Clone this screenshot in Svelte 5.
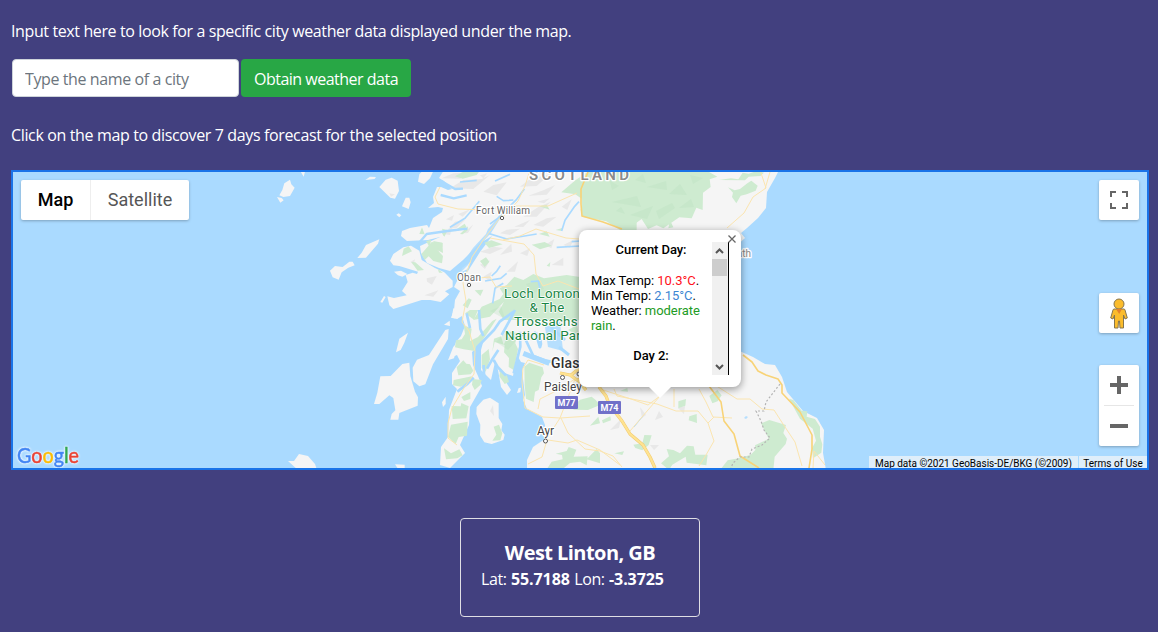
<script>
  let city = $state('');

  const logo = [
    ['G', '#4285f4'], ['o', '#ea4335'], ['o', '#fbbc05'],
    ['g', '#4285f4'], ['l', '#34a853'], ['e', '#ea4335']
  ];
</script>

<main>
  <p class="intro">Input text here to look for a specific city weather data displayed under the map.</p>
  <form class="search" onsubmit={(e) => e.preventDefault()}>
    <input placeholder="Type the name of a city" bind:value={city} />
    <button class="obtain">Obtain weather data</button>
  </form>
  <p class="hint">Click on the map to discover 7 days forecast for the selected position</p>

  <section class="map">
    <svg class="terrain" viewBox="13 172 1134 296" width="1134" height="296">
      <rect x="13" y="172" width="1134" height="296" fill="#aadaff" />
      <!-- mainland -->
      <path fill="#f5f5f5" d="M444 170 L439 178 444 181 452 189 448 190 441 187 437 187 433 197 434 203 428 208 438 207 443 208 442 212 433 218 429 228 427 225 410 228 402 231 401 236 407 241 428 240 440 237 420 246 421 253 427 263 439 268 450 271 463 260 480 243 492 236 480 252 468 271 459 277 454 287 460 291 455 300 454 310 457 319 462 316 465 326 461 336 456 342 450 358 457 355 460 361 452 373 452 384 457 389 449 410 448 437 441 447 440 465 450 468 465 453 460 445 469 425 470 407 482 386 478 376 473 365 472 352 477 348 484 339 481 350 481 370 491 380 495 362 498 370 501 387 507 395 511 390 499 371 513 376 517 355 521 362 525 363 522 371 525 395 523 400 527 409 542 417 545 425 545 439 533 447 527 460 527 470 826 470 823 453 824 430 817 418 803 411 787 392 782 377 775 365 765 364 753 357 735 349 700 340 700 240 735 247 745 238 741 233 747 228 758 218 766 208 767 192 775 178 779 170Z" />
      <!-- western islands -->
      <g transform="translate(260 165) scale(.33333)" fill="#f5f5f5">
        <path d="M90 44 94 58 104 68 90 93 70 96 58 91 67 75 73 55ZM51 96 65 99 71 106 61 113ZM122 20 135 20 131 35ZM316 45 330 35 348 36 344 42ZM358 66 377 44 395 38 413 47 417 78 405 101 391 98ZM474 50 478 28 487 18 520 18 510 40 492 57ZM426 124 437 98 448 98 452 112 446 132ZM409 149 416 145 424 151 418 157ZM358 223 354 236 318 278 292 279 305 263 318 240ZM210 317 225 303 248 306 268 290 278 290 284 301 265 308 245 322 236 344 218 337ZM361 411 372 393 377 396 367 413Z" />
        <path d="M430 247 453 242 478 257 485 285 525 309 553 322 578 347 578 366 555 379 568 388 542 411 511 405 485 405 400 432 388 421 382 394 402 399 440 391 426 378 443 351 437 330 458 323 471 327 474 320 418 303 400 301 390 287 400 267Z" />
        <path d="M402 320 423 317 442 327 427 335 414 331Z" />
        <path d="M632 290 622 313 600 323 607 308ZM596 374 608 360 620 357 608 378ZM580 430 588 432 586 460 575 458Z" />
      </g>
      <g transform="translate(360 310) scale(.33333)" fill="#f5f5f5">
        <path d="M108 127 118 86 144 68 133 98 122 120ZM158 173 171 149 207 135 256 60 266 57 264 87 219 163 196 223 178 229 160 214ZM61 199 92 198 127 162 148 158 151 198 165 245 174 262 173 287 118 309 115 329 91 329 95 312 106 301 100 264 88 256 58 282 42 282 52 248ZM246 277 257 260 257 282 249 291ZM273 23 282 0 294 2 292 27ZM252 44 269 32 270 48ZM264 151 280 110 295 97 282 145ZM105 463 134 464 134 480 115 478ZM471 249 476 234 483 233 481 247Z" />
        <path d="M350 291 370 269 390 263 416 280 416 324 427 342 424 361 434 374 430 390 395 402 373 397 360 376 361 344 349 312Z" />
      </g>
      <path fill="#f5f5f5" d="M288 461 294 461 299 454 308 456 315 464 317 470 298 470Z" />

      <!-- relief shading -->
      <g fill="#e8e8e8">
        <g transform="translate(420 165) scale(.33333)">
          <path d="M65 40 100 25 150 22 120 41ZM90 70 130 45 185 42 210 30 160 72ZM190 80 220 60 260 52 230 91ZM180 31 202 25 190 40ZM300 65 330 42 390 28 350 63ZM115 147 150 133 128 155ZM85 191 105 170 135 165 110 189ZM130 205 160 178 144 204ZM325 92 370 76 405 60 380 89ZM310 155 355 126 392 110 350 155ZM283 185 330 165 310 186ZM340 180 380 160 410 155 370 185ZM240 205 260 194 300 191 270 210ZM180 260 220 245 250 249 210 267ZM240 270 274 236 276 260ZM300 265 330 250 322 273ZM180 299 210 286 195 312ZM260 320 294 289 285 320ZM375 240 403 222 394 250ZM430 240 460 225 450 248ZM395 300 430 278 430 302ZM30 273 60 242 53 279ZM190 335 215 320 208 348ZM425 125 455 103 442 135ZM352 110 390 100 372 115Z" />
        </g>
        <g transform="translate(260 165) scale(.33333)">
          <path d="M500 340 530 333 516 359 501 350ZM493 391 535 376 520 395ZM552 207 579 180 570 210ZM388 85 405 88 393 95ZM452 290 465 283 460 300ZM558 163 582 150 576 167Z" />
        </g>
        <path d="M490 411 493 405 494 416ZM610 430 621 419 619 428ZM650 445 654 450 659 445ZM640 407 642 418 646 415ZM678 408 685 406 684 414ZM655 420 659 411 663 417Z" />
      </g>

      <!-- woodland -->
      <g fill="#ceebd0">
        <g transform="translate(420 165) scale(.33333)">
          <path d="M424 82 466 46 507 18 650 18 650 205 600 195 559 169 485 155 485 101 466 88Z" />
          <path d="M105 34 128 21 178 19 170 30 128 41ZM120 207 144 184 142 197 128 208ZM66 191 83 195 73 216ZM40 228 67 233 69 264 45 252ZM193 233 214 226 248 238 207 249ZM180 288 198 277 208 290 194 306ZM335 239 374 231 395 242 360 253ZM357 207 380 199 389 215ZM380 302 391 291 389 305ZM407 195 429 188 425 198ZM128 421 146 400 155 404 143 430ZM164 376 190 374 181 393ZM260 360 283 335 310 345 340 327 372 340 440 330 485 337 485 465 252 465 236 440 252 410 210 455 160 465 185 425 239 402 250 387 239 370ZM177 441 218 410 209 446ZM18 228 34 224 28 245ZM358 124 380 119 389 134Z" />
        </g>
        <g transform="translate(620 165) scale(.33333)">
          <path d="M0 18 262 18 292 35 269 43 272 66 249 83 248 135 229 128 215 160 178 157 130 190 110 181 84 192 65 162 36 183 0 193ZM297 45 333 40 355 43 368 23 386 26 410 18 432 23 421 33 386 35 375 46ZM324 67 344 76 360 72 382 55 394 47 413 62 407 77 380 88 362 92 349 115 336 96 339 83ZM145 190 150 165 160 187Z" />
        </g>
        <g transform="translate(260 165) scale(.33333)">
          <path d="M478 207 486 187 494 208ZM426 273 431 251 446 244 456 259ZM454 291 466 292 492 315 473 317ZM484 267 505 243 515 231 548 234 547 246 530 253 549 273 546 295 520 288 506 274 494 285ZM533 311 548 323 537 323ZM592 191 614 176 620 187 592 198 570 199ZM543 199 557 199 551 214Z" />
        </g>
        <g transform="translate(360 310) scale(.33333)">
          <path d="M315 10 330 0 354 0 342 29ZM311 45 335 56 330 93 354 81 397 33 410 26 385 65 345 123 311 118 285 112 288 91 305 88 315 72ZM402 86 423 79 431 104 450 65 472 69 466 100 474 117 462 181 446 171 447 144 432 127 434 105 404 96 397 125ZM365 135 386 117 390 148 377 185 365 174ZM290 172 310 151 319 161 330 163 340 182 332 193 295 196ZM281 210 336 199 327 218 302 230 279 226ZM338 207 365 210 361 225 344 240 336 224ZM304 261 331 246 331 267 312 273ZM275 288 302 289 304 279 326 289 319 325 278 327ZM273 344 323 335 321 377 296 381 287 402 264 380ZM252 415 273 430 298 418 308 436 292 445 258 448ZM401 350 417 344 427 370 421 391 397 392 409 374ZM493 170 508 158 548 172 552 190 544 202 536 240 525 245 521 276 498 266 494 226ZM421 175 441 197 447 216 434 222 418 199ZM645 284 660 269 695 260 707 270 720 285 684 300 640 299ZM575 455 608 448 606 435 587 431 620 423 626 411 649 419 641 440 683 439 680 466 660 455 630 459 607 478 560 478ZM690 347 715 320 720 340ZM680 448 710 417 720 430 720 460Z" />
        </g>
        <g transform="translate(600 340) scale(.33333)">
          <path d="M6 241 31 229 33 241 9 250ZM100 314 127 310 133 285 155 286 146 315 127 331 106 324ZM43 340 72 334 67 345ZM183 370 207 349 200 327 220 330 240 340 261 317 281 319 286 344 323 344 319 376 260 368 257 350 217 374 207 390ZM235 184 258 177 256 197 235 205ZM328 168 352 150 365 166 353 184 337 190ZM268 229 290 222 291 249 266 241ZM60 153 82 144 84 155ZM483 250 508 240 558 255 550 279 561 296 557 312 524 350 520 390 360 390 383 361 420 354 452 344 466 330 465 316 506 296ZM567 176 580 180 605 212 622 214 620 230 645 237 660 260 660 290 667 313 664 338 639 355 636 325 648 302 638 266 600 236Z" />
        </g>
        <path d="M580 210 587 206 590 214ZM568 330 577 325 579 336ZM566 403 574 405 571 408Z" />
      </g>
      <g fill="#b7dfbd" opacity=".3">
        <path d="M635 180 643 174 646 183ZM647 187 666 181 667 190ZM669 194 680 184 687 195ZM612 202 637 196 641 207ZM630 215 653 206 647 219ZM656 211 672 203 675 208 659 219ZM679 208 691 199 694 207ZM690 175 703 178 693 184ZM610 181 619 186 612 190ZM616 211 621 207 625 214ZM526 284 539 280 544 289 533 293ZM490 311 501 306 505 319ZM496 342 508 330 518 338 508 350Z" />
      </g>

      <!-- lochs and sounds -->
      <g fill="none" stroke="#aadaff" stroke-linejoin="round">
        <g transform="translate(420 165) scale(.33333)">
          <path d="M65 49 105 72 129 71M62 90 101 100 140 91M142 191 82 198 20 207 0 230" stroke-width="7" />
          <path d="M90 187 135 160 178 109M210 177 233 160 290 103 313 72M425 198 435 166 464 124 477 110M215 333 229 320 241 302M205 205 260 222 350 207M225 48 270 28M230 94 250 107 280 105M455 230 480 228M120 51 170 46M332 350 355 348 360 370" stroke-width="5" />
          <path d="M195 348 242 340 260 325M218 415 225 370 250 355M410 247 481 243" stroke-width="5" />
        </g>
        <g transform="translate(360 310) scale(.33333)">
          <path d="M292 245 323 221 341 203M346 139 352 111 402 60 420 34 461 5M371 165 373 215M381 176 395 151 415 120M480 65 481 110 461 190M488 70 520 138 555 151 602 161M425 75 447 35 465 0M401 150 413 171 438 197M320 10 330 54M357 0 361 57 370 78" stroke-width="8" />
          <path d="M490 130 515 140 568 160" stroke-width="15" />
        </g>
        <path d="M534 332Q543 340 540 347L536 333M559 347L569 355M551 327L565 340" stroke-width="3" />
        <path d="M634 427L643 416" stroke-width="1" />
      </g>
      <path fill="#aadaff" d="M452 274 463 263 473 248 486 234 488 229 499 217 503 214 491 233 478 247 468 265 457 276ZM744 418 746 416 748 417 746 419ZM545 327 560 322 563 351 548 347Z" opacity=".85" />

      <!-- roads -->
      <g fill="none" stroke="#fbe5b0" stroke-width="1" stroke-linejoin="round">
        <path d="M440 187 435 197 438 204 458 209 487 210 505 206 548 206 577 193M502 215 493 227 484 239 472 257 463 283 466 301 462 322 469 331 475 351M490 238 524 244 534 255 536 274 543 286 558 281 579 289M503 240 520 236 536 229 566 238 579 239M468 279 490 277 496 287 512 286M530 170 525 186 518 201 504 216M475 351 474 374 464 388 452 408 448 423 448 438 457 445M544 365 528 360 523 368 522 382 525 408 537 414 543 417 560 418 590 416M546 440 560 418 575 379 556 391 540 399 538 409M547 440 542 457 528 464M548 440 568 443 577 440 600 450 620 465M561 418 568 433 585 449 600 451M760 170 766 188 753 197 744 213 727 228M770 172 765 189M600 389 631 399 648 405 660 396 630 431M614 389 617 396 657 404 676 411 698 411 708 423 714 441 706 455 699 466M674 389 674 407M699 389 706 402 713 417 732 418M715 385 737 399 750 399 762 409 774 410 783 424 795 442 802 466M600 451 613 456 622 467M660 396 668 389M708 423 714 417M813 468 814 451 825 465" />
      </g>
      <g fill="none" stroke="#f8d377" stroke-width="1.600" stroke-linejoin="round">
        <path d="M588 172 581 189 581 204 582 216 603 222 622 229M709 386 721 402 724 421 734 434 740 456 759 468M743 355 752 362 758 371 766 375 778 379 782 385 782 393 800 412 812 435 812 449 809 468" />
      </g>
      <g fill="none" stroke-linejoin="round">
        <path d="M560 373 570 375 577 380 590 376M570 376 582 366M577 379 586 390M599 387 606 396 609 404 622 421 630 434 643 445 650 457 655 468" stroke="#f2cc72" stroke-width="3.300" />
        <path d="M560 373 570 375 577 380 590 376M570 376 582 366M577 379 586 390M599 387 606 396 609 404 622 421 630 434 643 445 650 457 655 468" stroke="#ffe391" stroke-width="2.200" />
      </g>
      <path d="M780 384 773 393 766 402 764 411 756 411 761 421 764 430 770 438 762 445 752 449 749 457 740 457 733 463 731 468" fill="none" stroke="#b4b4b4" stroke-width="1.200" stroke-dasharray="2 2" />

      <!-- place names -->
      <g class="labels" text-anchor="middle">
        <text class="country" x="529" y="180" text-anchor="start" textLength="100">SCOTLAND</text>
        <text x="503" y="213.500" textLength="54">Fort William</text>
        <text x="469" y="280.500" textLength="24">Oban</text>
        <text class="town" x="563" y="391" textLength="38">Paisley</text>
        <text class="town" x="545.500" y="435" textLength="17">Ayr</text>
        <text class="city" x="551" y="368" text-anchor="start">Glasgow</text>
        <text class="coast" x="751" y="257" text-anchor="end">Arbroath</text>
        <g class="park">
          <text x="504" y="298" text-anchor="start">Loch Lomond</text>
          <text x="547" y="312">&amp; The</text>
          <text x="514" y="326" text-anchor="start">Trossachs</text>
          <text x="505" y="340" text-anchor="start">National Park</text>
        </g>
      </g>
      <g fill="#fff" stroke="#555" stroke-width="1">
        <circle cx="502" cy="218" r="1.700" /><circle cx="469" cy="285" r="1.700" />
        <circle cx="562.500" cy="377.500" r="2" /><circle cx="545.500" cy="441" r="2" />
        <circle cx="579" cy="374" r="2" />
      </g>
      <g class="shield" text-anchor="middle">
        <rect x="555" y="396" width="23" height="13" rx="1" /><text x="566.500" y="406" textLength="18">M77</text>
        <rect x="598" y="401" width="23" height="13" rx="1" /><text x="609.500" y="411" textLength="18">M74</text>
      </g>
      <text class="logo" x="17" y="463" textLength="62" lengthAdjust="spacingAndGlyphs">{#each logo as [letter, color]}<tspan fill={color} stroke={color}>{letter}</tspan>{/each}</text>
    </svg>

    <div class="types"><button class="active">Map</button><button>Satellite</button></div>

    <button class="control fullscreen" aria-label="Fullscreen">
      <svg width="18" height="18" viewBox="0 0 18 18" fill="none" stroke="#666" stroke-width="2"><path d="M1 6V1H6M12 1H17V6M17 12V17H12M6 17H1V12" /></svg>
    </button>
    <button class="control person" aria-label="Street View">
      <svg width="18" height="31" viewBox="0 0 18 31"><g fill="#fbbc2c" stroke="#857650" stroke-width="1" stroke-linejoin="round"><path d="M4 11H14Q15 11 15.300 13L17.300 20 15 21 13.500 17V30H10L9.500 23H8.500L8 30H4.500V17L3 21 .7 20 2.700 13Q3 11 4 11Z" /><circle cx="9" cy="6" r="5" /></g><path d="M6 11H12L9.200 16Z" fill="#e3812d" /></svg>
    </button>
    <div class="zoom">
      <button aria-label="Zoom in"><svg width="18" height="18" viewBox="0 0 18 18"><path d="M7 0H11V7H18V11H11V18H7V11H0V7H7Z" fill="#666" /></svg></button>
      <i></i>
      <button aria-label="Zoom out"><svg width="18" height="4" viewBox="0 0 18 4"><path d="M0 0H18V4H0Z" fill="#666" /></svg></button>
    </div>
    <div class="credits"><span class="data">Map data ©2021 GeoBasis-DE/BKG (©2009)</span><span class="terms">Terms of Use</span></div>

    <div class="popup">
      <div class="forecast">
        <div class="days">
          <h4>Current Day:</h4>
          <p>Max Temp: <span class="max">10.3°C</span>.<br />Min Temp: <span class="min">2.15°C</span>.<br />Weather: <span class="sky">moderate<br />rain</span>.</p>
          <h4>Day 2:</h4>
        </div>
        <div class="scroll">
          <svg width="9" height="6" viewBox="0 0 9 6"><path d="M1 5 4.500 1.500 8 5" /></svg>
          <b></b>
          <svg class="down" width="9" height="6" viewBox="0 0 9 6"><path d="M1 1 4.500 4.500 8 1" /></svg>
        </div>
      </div>
      <svg class="close" width="10" height="10" viewBox="0 0 10 10"><path d="M1.500 1.500 8.500 8.500M8.500 1.500 1.500 8.500" stroke="#666" stroke-width="1.300" /></svg>
      <svg class="tail" width="24" height="12" viewBox="0 0 24 12"><path d="M0 0H24L12 12Z" fill="#fff" /></svg>
    </div>
  </section>

  <article class="card">
    <h5>West Linton, GB</h5>
    <p>Lat: <b>55.7188</b> Lon: <b>-3.3725</b></p>
  </article>
</main>

<style>
  :global(body) { background: #42407f; overflow: hidden; }
  main { box-sizing: border-box; height: 632px; padding: 19px 9px 0 11px; color: #fff; font: 16px/24px "Open Sans", "Noto Sans", sans-serif; }
  p, h4, h5 { margin: 0; }
  button { border: 0; font: inherit; padding: 0; }
  .intro, .hint { white-space: nowrap; letter-spacing: -0.385px; }
  .hint { letter-spacing: -0.36px; }
  .search { display: flex; gap: 2px; margin: 16px 0 26px 1px; }
  .search input { box-sizing: border-box; width: 227px; height: 38px; border: 1px solid #ced4da; border-radius: 4px; padding: 4px 12px 2px; background: #fff; color: #495057; font: inherit; letter-spacing: -0.4px; }
  .search input::placeholder { color: #6c757d; opacity: 1; }
  .obtain { width: 170px; height: 38px; padding-top: 2px; border-radius: 4px; background: #28a745; color: #fff; letter-spacing: -0.5px; white-space: nowrap; }
  .map { box-sizing: border-box; position: relative; margin-top: 23px; height: 300px; border: 2px solid #1a73e8; font-family: Roboto, sans-serif; overflow: hidden; }
  .terrain { display: block; }
  .labels { font: 10px Roboto, sans-serif; fill: #666; stroke: #fff; stroke-width: 2.5px; stroke-linejoin: round; paint-order: stroke; }
  .labels .country { font-size: 15px; font-weight: 600; fill: #8b8b8b; }
  .labels .town { font-size: 12px; fill: #444; }
  .labels .city { font-size: 14px; font-weight: 500; fill: #333; letter-spacing: .2px; }
  .labels .coast { fill: #888; }
  .park { font-size: 13.3px; fill: #188544; letter-spacing: .25px; stroke-width: 1.5px; }
  .shield { font: bold 9px Roboto, sans-serif; }
  .shield rect { fill: #7070c9; }
  .shield text { fill: #fff; }
  .logo { font: 22px Lato, sans-serif; stroke-width: .5px; filter: drop-shadow(0 0 1px #fff) drop-shadow(0 0 1px #fff8); }
  .types { position: absolute; top: 8px; left: 8px; display: flex; height: 40px; background: #fff; border-radius: 2px; box-shadow: 0 1px 3px #0004; }
  .types button { width: 98px; background: none; color: #565656; font-size: 18px; }
  .types .active { width: 70px; border-right: 1px solid #eee; color: #000; font-weight: 500; }
  .control { position: absolute; right: 8px; display: grid; place-items: center; width: 40px; height: 40px; background: #fff; border-radius: 2px; box-shadow: 0 1px 3px #0004; }
  .fullscreen { top: 8px; }
  .person { top: 121px; padding-right: 1px; }
  .zoom { position: absolute; right: 8px; top: 193px; width: 40px; height: 81px; display: flex; flex-direction: column; align-items: center; background: #fff; border-radius: 2px; box-shadow: 0 1px 3px #0004; }
  .zoom button { width: 40px; height: 40px; background: none; display: grid; place-items: center; }
  .zoom i { width: 30px; height: 1px; background: #e6e6e6; }
  .credits { position: absolute; right: 0; bottom: -2px; display: flex; gap: 1px; height: 14px; color: #000; font-size: 10px; line-height: 15px; white-space: nowrap; }
  .credits span { box-sizing: border-box; background: #dfeefa; text-align: center; }
  .data { width: 209px; letter-spacing: -.02px; }
  .terms { width: 68px; letter-spacing: .02px; }
  .popup { position: absolute; left: 566px; top: 58px; width: 162px; height: 157px; box-sizing: border-box; padding: 12px; background: #fff; border-radius: 8px; box-shadow: 0 2px 7px 1px #0005; color: #000; font-size: 13px; line-height: 15px; }
  .forecast { display: flex; height: 133px; border-right: 1px solid #000; }
  .days { width: 121px; overflow: hidden; }
  .days h4 { padding-right: 1px; font: 500 13px/15px Roboto, sans-serif; text-align: center; letter-spacing: -.08px; }
  .days p { margin: 16px 0 15px; white-space: nowrap; letter-spacing: -.06px; }
  .max { color: #ff1020; }
  .min { color: #3c86d3; }
  .sky { color: #229b25; }
  .scroll { width: 16px; box-sizing: border-box; padding: 6px 1px 5px 0; background: #f0f0f0; display: flex; flex-direction: column; align-items: center; }
  .scroll b { width: 15px; height: 17px; margin-top: 5px; background: #cdcdcd; }
  .scroll path { fill: none; stroke: #555; stroke-width: 2; }
  .down { margin-top: auto; }
  .close { position: absolute; top: 4px; right: 4px; }
  .tail { position: absolute; left: 69px; top: 156px; }
  .card { box-sizing: border-box; width: 240px; height: 99px; margin: 48px auto 0 449px; padding: 22px 20px; border: 1px solid #dfdfe4; border-radius: 4px; }
  .card h5 { font-size: 20px; line-height: 24px; font-weight: 700; text-align: center; white-space: nowrap; letter-spacing: -.55px; }
  .card p { margin-top: 2px; font-size: 16px; white-space: nowrap; letter-spacing: -.43px; word-spacing: .8px; }
  .card b { letter-spacing: -.1px; }
</style>
